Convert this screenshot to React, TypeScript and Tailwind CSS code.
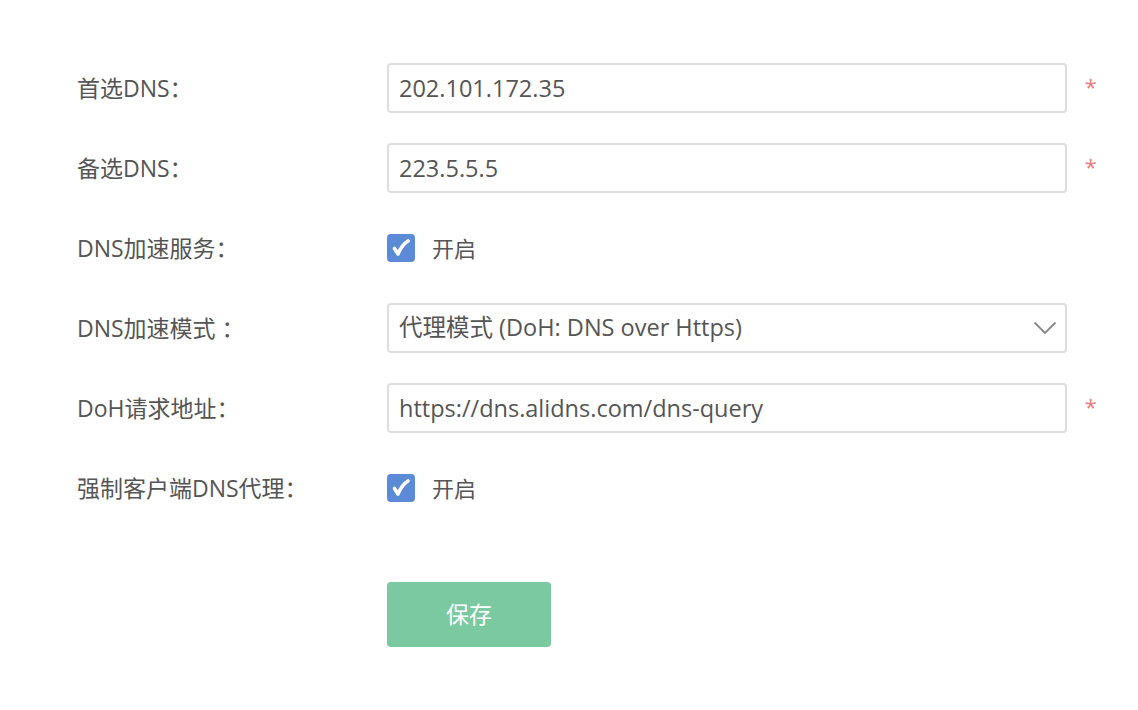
import { useState } from "react";

type Field = {
    label: string;
    kind: "input" | "check" | "select";
    value?: string;
    required?: boolean;
};

const fields: Field[] = [
    { label: "首选DNS：", kind: "input", value: "202.101.172.35", required: true },
    { label: "备选DNS：", kind: "input", value: "223.5.5.5", required: true },
    { label: "DNS加速服务：", kind: "check" },
    { label: "DNS加速模式 ：", kind: "select", value: "代理模式 (DoH: DNS over Https)" },
    { label: "DoH请求地址：", kind: "input", value: "https://dns.alidns.com/dns-query", required: true },
    { label: "强制客户端DNS代理：", kind: "check" },
];

function CheckBox() {
    const [on, setOn] = useState(true);
    return (
        <label className="flex items-center gap-[17px] cursor-pointer select-none">
            <span onClick={() => setOn(!on)}
                className={"w-[28px] h-[28px] rounded-[4px] flex items-center justify-center " + (on ? "bg-[#5b8ad6]" : "bg-white border border-[#ccc]")}>
                {on && (
                    <svg width="20" height="20" viewBox="0 0 20 20">
                        <path d="M3.5 10.5 L7 16 C9.5 10 13 5.5 17 3" fill="none" stroke="white" strokeWidth="3.6" strokeLinecap="round" strokeLinejoin="round" />
                    </svg>
                )}
            </span>
            <span className="text-[22px] text-[#555]">开启</span>
        </label>
    );
}

export default function App() {
    return (
        <div className="min-h-[710px] bg-white pl-[77px] pt-[63px] font-['Open_Sans','Noto_Sans_CJK_SC',sans-serif] text-[#555]">
            <div className="flex flex-col gap-[30px]">
                {fields.map((f) => (
                    <div key={f.label} className="flex items-center h-[50px]">
                        <div className="w-[310px] text-[23px]">{f.label}</div>
                        {f.kind === "input" && (
                            <input defaultValue={f.value}
                                className="w-[680px] h-[50px] border-[2px] border-[#ddd] rounded-[4px] px-[10px] text-[23.5px] text-[#555] outline-none" />
                        )}
                        {f.kind === "select" && (
                            <div className="w-[680px] h-[50px] border-[2px] border-[#ddd] rounded-[4px] pl-[10px] pr-[8px] flex items-center justify-between text-[23.5px]">
                                <span>{f.value}</span>
                                <svg width="24" height="14" viewBox="0 0 24 14">
                                    <path d="M1.5 1.5 L12 12 L22.5 1.5" fill="none" stroke="#888" strokeWidth="1.8" />
                                </svg>
                            </div>
                        )}
                        {f.kind === "check" && <CheckBox />}
                        {f.required && <span className="ml-[18px] text-[21px] text-[#ec7b7b]">*</span>}
                    </div>
                ))}
            </div>
            <button className="mt-[69px] ml-[310px] w-[164px] h-[65px] rounded-[4px] bg-[#7ac9a1] text-white text-[23px]">
                保存
            </button>
        </div>
    );
}
